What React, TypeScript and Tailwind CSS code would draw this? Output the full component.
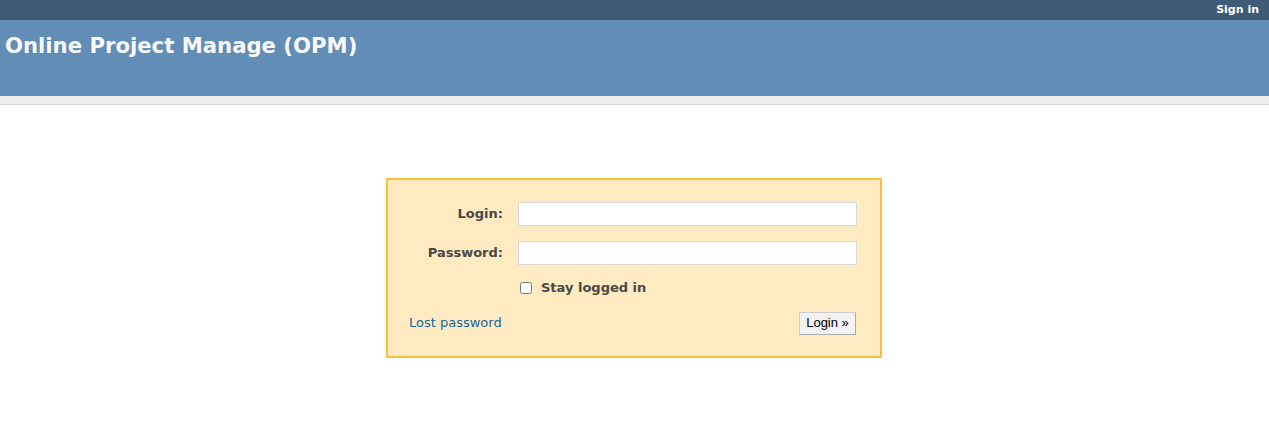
import React from "react";

const Field = ({ label, type }: { label: string; type: string }) => (
  <div className="flex items-center">
    <label className="w-[115px] text-right text-[13px] font-bold text-[#484848]">
      {label}
    </label>
    <input
      type={type}
      className="ml-[15px] h-6 w-[339px] border border-[#d7d7d7] bg-white px-1 text-[13px] outline-none"
    />
  </div>
);

export default function App() {
  return (
    <div className="min-h-[430px] bg-white font-['DejaVu_Sans',Verdana,sans-serif] text-[#484848]">
      <div className="flex h-5 items-center justify-end bg-[#3e5b76] pr-[10px]">
        <a href="#" className="text-[11px] font-bold text-white">
          Sign in
        </a>
      </div>
      <div className="h-[76px] bg-[#628db6] px-[5px] pt-[10px]">
        <h1 className="text-[21.2px] font-bold text-[#f8f8f8]">
          Online Project Manage (OPM)
        </h1>
      </div>
      <div className="h-[9px] border-b border-[#d7d7d7] bg-[#eeeeee]" />
      <div className="flex justify-center pr-px pt-[73px]">
        <div className="w-[496px] border-2 border-[#fdbf3b] bg-[#ffebc1] pb-[21px] pt-[22px]">
          <div className="flex flex-col gap-[15px]">
            <Field label="Login:" type="text" />
            <Field label="Password:" type="password" />
          </div>
          <div className="mt-[13px] flex items-center pl-[132px]">
            <input type="checkbox" className="h-3 w-3" />
            <span className="ml-[9px] text-[13px] font-bold">Stay logged in</span>
          </div>
          <div className="mt-[14px] flex items-center justify-between pl-[21px] pr-[24px]">
            <a href="#" className="text-[13px] text-[#116699]">
              Lost password
            </a>
            <button className="h-[23px] w-[57px] border border-[#aaa] border-l-[#ccc] border-t-[#ccc] bg-[#f2f2f2] font-['Liberation_Sans',Arial,sans-serif] text-[13px] text-black">
              Login »
            </button>
          </div>
        </div>
      </div>
    </div>
  );
}
